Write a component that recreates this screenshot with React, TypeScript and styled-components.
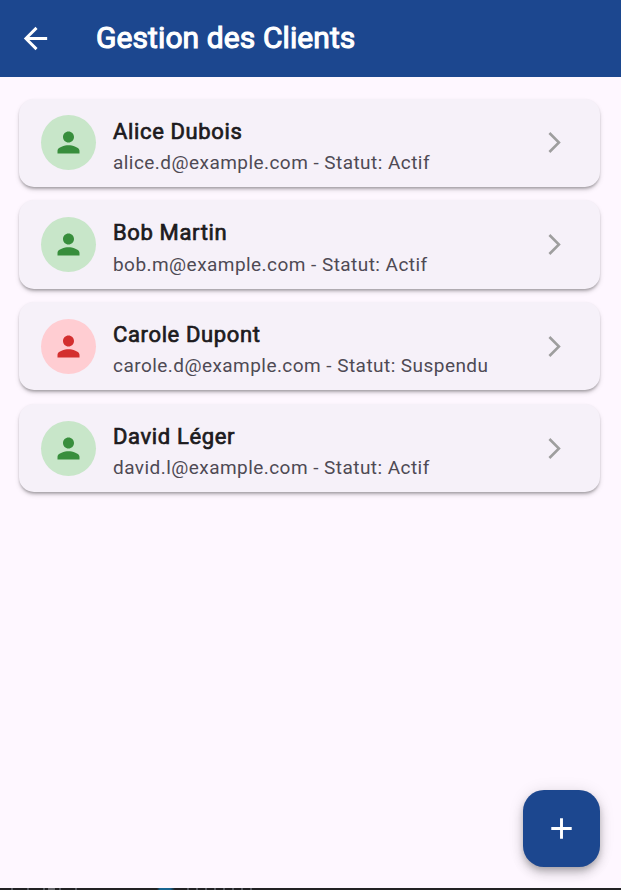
import React from 'react';
import styled, { createGlobalStyle } from 'styled-components';

const Global = createGlobalStyle`
  *{box-sizing:border-box}
  body{margin:0;background:#fef7ff;font-family:Roboto,sans-serif;overflow:hidden}
`;
const Screen = styled.div`height:890px;display:flex;flex-direction:column;position:relative;background:#fef7ff;`;
const AppBar = styled.header`height:77px;flex:none;background:#1c478f;color:#fff;display:flex;align-items:center;padding-left:18px;`;
const BackButton = styled.button`border:0;background:none;padding:0;width:35px;height:35px;color:#fff;svg{display:block}`;
const Title = styled.h1`margin:0 0 2px 43px;font-size:30px;line-height:36px;font-weight:400;letter-spacing:.09px;-webkit-text-stroke:1.1px #fff;white-space:nowrap;`;
const List = styled.main`flex:1;padding:21.5px 21px 0 19px;display:flex;flex-direction:column;gap:13.4px;`;
const Card = styled.article`height:88.4px;flex:none;border-radius:15px;background:#f6f1f9;box-shadow:0 3px 3px -1px rgba(0,0,0,.2),0 1px 2px rgba(0,0,0,.09),0 3px 5px rgba(0,0,0,.12);display:flex;align-items:center;padding:0 30px 0 22px;`;
const Avatar = styled.div<{ $suspended: boolean }>`width:55px;height:55px;border-radius:50%;display:flex;align-items:center;justify-content:center;background:${p => p.$suspended ? '#ffcdd2' : '#c8e6c9'};color:${p => p.$suspended ? '#d32f2f' : '#388e3c'};`;
const Info = styled.div`flex:1;margin-left:17px;padding-top:7.95px;white-space:nowrap;`;
const Name = styled.div`font-size:22px;line-height:31px;padding-bottom:.15px;letter-spacing:.64px;color:#1d1b20;-webkit-text-stroke:.7px #1d1b20;`;
const Detail = styled.div`font-size:19px;line-height:31px;letter-spacing:.45px;color:#4e4a54;`;
const Fab = styled.button`position:absolute;right:21px;bottom:23px;width:77px;height:77px;border:0;border-radius:21px;background:#1c478f;color:#fff;padding:0;display:flex;align-items:center;justify-content:center;box-shadow:0 4px 6px -1px rgba(0,0,0,.2),0 7px 12px rgba(0,0,0,.14),0 1px 16px rgba(0,0,0,.1);`;
const BottomEdge = styled.div`
  height:2px;flex:none;
  background:
    linear-gradient(90deg,transparent 157px,#176591 160px,#176591 170px,transparent 175px),
    linear-gradient(90deg,transparent 48px,#66666b 48px,#66666b 55px,transparent 55px),
    repeating-linear-gradient(90deg,transparent 0 11px,#55585e 11px 13px,transparent 13px 16px) 0 0/78px 2px no-repeat,
    repeating-linear-gradient(90deg,transparent 0 7px,#55585e 7px 9px) 180px 0/72px 2px no-repeat,
    #222224;
`;

const icons = {
  back: 'M20 11H7.83l5.59-5.59L12 4l-8 8 8 8 1.41-1.41L7.83 13H20v-2z',
  person: 'M12 12c2.21 0 4-1.79 4-4s-1.79-4-4-4-4 1.79-4 4 1.79 4 4 4zm0 2c-2.67 0-8 1.34-8 4v2h16v-2c0-2.66-5.33-4-8-4z',
  chevron: 'M6.23 20.23L8 22l10-10L8 2 6.23 3.77 14.46 12z',
  add: 'M19 13h-6v6h-2v-6H5v-2h6V5h2v6h6v2z',
};
const Icon = ({ name, size = 33 }: { name: keyof typeof icons; size?: number }) => (
  <svg width={size} height={size} viewBox="0 0 24 24" fill="currentColor" aria-hidden="true"><path d={icons[name]} /></svg>
);
const Arrow = styled.span`display:flex;justify-content:center;width:31px;color:#9e9e9e;`;

const clients = [
  { name: 'Alice Dubois', email: 'alice.d@example.com', status: 'Actif' },
  { name: 'Bob Martin', email: 'bob.m@example.com', status: 'Actif' },
  { name: 'Carole Dupont', email: 'carole.d@example.com', status: 'Suspendu' },
  { name: 'David Léger', email: 'david.l@example.com', status: 'Actif' },
];

export default function App() {
  return (
    <Screen>
      <Global />
      <AppBar><BackButton aria-label="Retour"><Icon name="back" size={35} /></BackButton><Title>Gestion des Clients</Title></AppBar>
      <List>
        {clients.map(c => (
          <Card key={c.email}>
            <Avatar $suspended={c.status === 'Suspendu'}><Icon name="person" /></Avatar>
            <Info><Name>{c.name}</Name><Detail>{c.email} - Statut: {c.status}</Detail></Info>
            <Arrow><Icon name="chevron" size={25} /></Arrow>
          </Card>
        ))}
      </List>
      <BottomEdge />
      <Fab aria-label="Ajouter"><Icon name="add" size={35} /></Fab>
    </Screen>
  );
}
